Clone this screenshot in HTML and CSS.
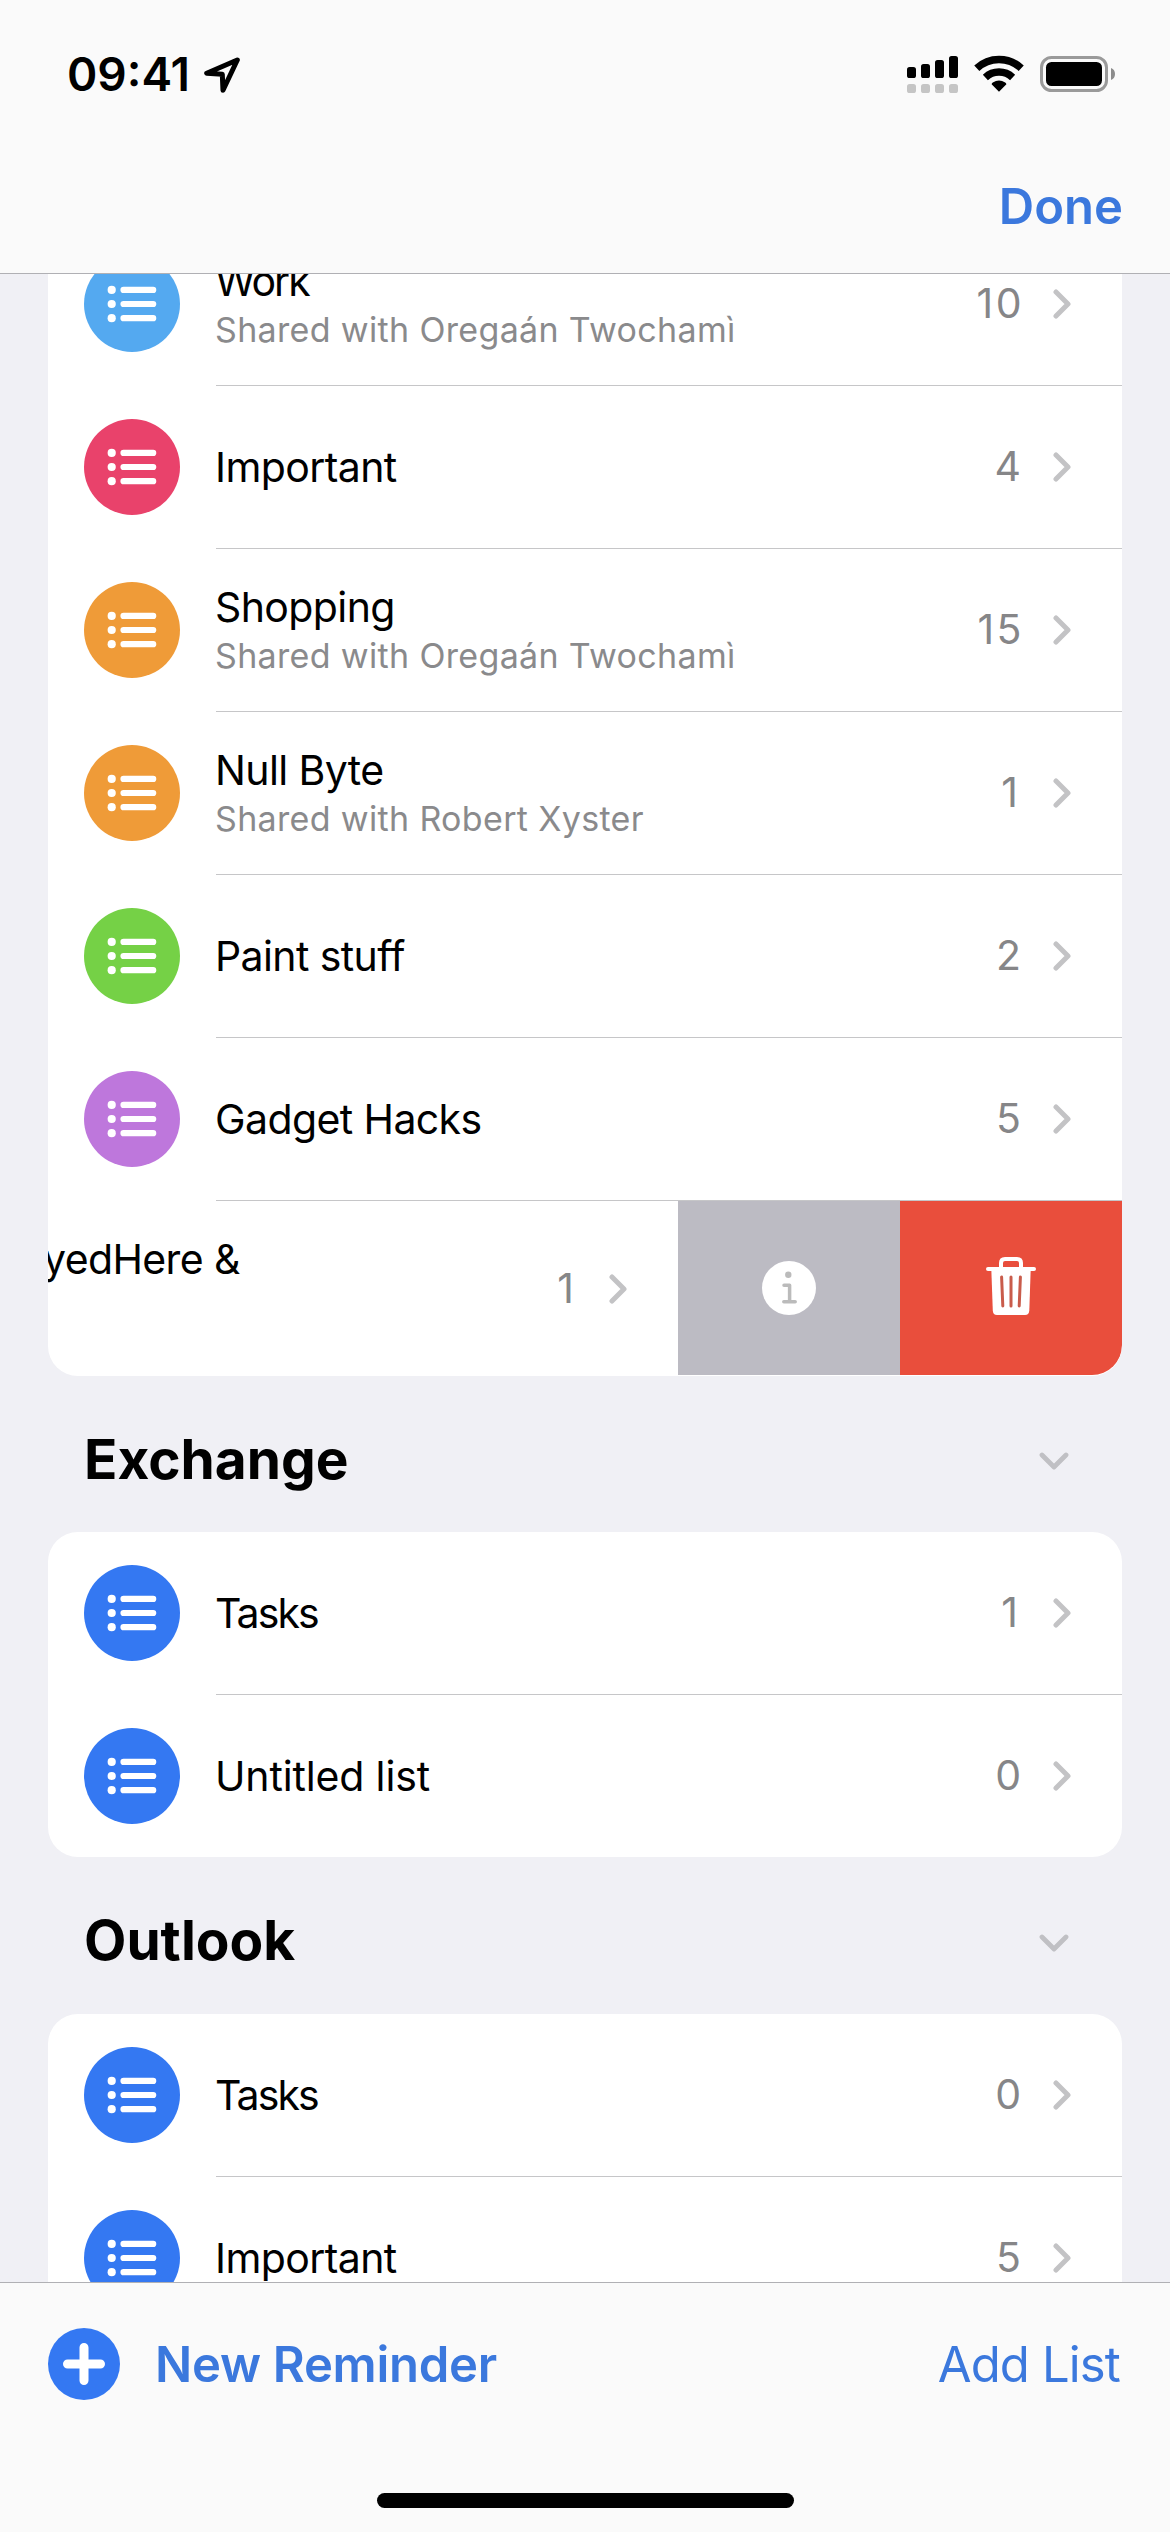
FILE: index.html
```
<!DOCTYPE html>
<html lang="en">
<head>
<meta charset="utf-8">
<title>Reminders</title>
<link rel="stylesheet" href="styles.css">
</head>
<body>
<svg class="sprite" aria-hidden="true">
  <symbol id="list" viewBox="0 0 96 96">
    <g fill="#fff"><circle cx="27.7" cy="33.9" r="4.1"/><circle cx="27.7" cy="48" r="4.1"/><circle cx="27.7" cy="62.2" r="4.1"/></g>
    <path d="M39.5 33.9H69.2M39.5 48H69.2M39.5 62.2H69.2" stroke="#fff" stroke-width="6.2" stroke-linecap="round"/>
  </symbol>
  <symbol id="next" viewBox="0 0 18 30">
    <path d="M3 3L15 15L3 27" fill="none" stroke="#c3c3c5" stroke-width="5" stroke-linecap="round" stroke-linejoin="round"/>
  </symbol>
  <symbol id="down" viewBox="0 0 30 18">
    <path d="M3 3L15 15L27 3" fill="none" stroke="#c0c0c4" stroke-width="4.8" stroke-linecap="round" stroke-linejoin="round"/>
  </symbol>
</svg>
<div class="screen">
  <header class="header">
    <div class="status">
      <div class="status-left">
        <span class="time">09:41</span>
        <svg class="location" width="37" height="37" viewBox="0 0 37 37"><path d="M33.3 3L2.7 16.3L18.3 17.3L19 33.3Z" fill="none" stroke="#000" stroke-width="5" stroke-linejoin="round"/></svg>
      </div>
      <div class="status-right">
        <svg width="51" height="37" viewBox="0 0 51 37">
          <rect x="0" y="11" width="9" height="11" rx="2.6"/><rect x="14" y="8" width="9" height="14" rx="2.6"/><rect x="28" y="4" width="9" height="18" rx="2.6"/><rect x="42" y="0" width="9" height="22" rx="2.6"/>
          <g fill="#c5c5c5"><rect x="0" y="28" width="9" height="9" rx="2.6"/><rect x="14" y="28" width="9" height="9" rx="2.6"/><rect x="28" y="28" width="9" height="9" rx="2.6"/><rect x="42" y="28" width="9" height="9" rx="2.6"/></g>
        </svg>
        <svg class="wifi" width="50" height="37" viewBox="0 0 50 37">
          <path d="M2.8 13.2A32.5 32.5 0 0 1 47.2 13.2M11.4 22.4A20 20 0 0 1 38.6 22.4" fill="none" stroke="#000" stroke-width="7.5"/>
          <path d="M25 36.8L17.6 29.2Q17.8 28.2 18.8 27.6Q25 23.6 31.2 27.6Q32.2 28.2 32.4 29.2Z"/>
        </svg>
        <svg width="75" height="36" viewBox="0 0 75 36">
          <rect x="1.5" y="1.5" width="65" height="33" rx="10" fill="none" stroke="#9a9a9a" stroke-width="3"/>
          <rect x="6" y="6" width="56" height="24" rx="5.5"/>
          <path d="M71 12Q75 13.5 75 18T71 24Z" fill="#8c8c8c"/>
        </svg>
      </div>
    </div>
    <div class="nav"><span class="done">Done</span></div>
  </header>

  <main class="content">
    <section class="card card-first">
      <div class="row">
        <svg class="badge sky"><use href="#list"/></svg>
        <div class="label"><span class="name tight">Work</span><span class="shared">Shared with Oregaán Twochamì</span></div>
        <span class="count two-digit">10</span><svg class="next"><use href="#next"/></svg>
      </div>
      <div class="row">
        <svg class="badge pink"><use href="#list"/></svg>
        <div class="label"><span class="name">Important</span></div>
        <span class="count">4</span><svg class="next"><use href="#next"/></svg>
      </div>
      <div class="row">
        <svg class="badge orange"><use href="#list"/></svg>
        <div class="label"><span class="name">Shopping</span><span class="shared">Shared with Oregaán Twochamì</span></div>
        <span class="count two-digit">15</span><svg class="next"><use href="#next"/></svg>
      </div>
      <div class="row">
        <svg class="badge orange"><use href="#list"/></svg>
        <div class="label"><span class="name">Null Byte</span><span class="shared">Shared with Robert Xyster</span></div>
        <span class="count one">1</span><svg class="next"><use href="#next"/></svg>
      </div>
      <div class="row">
        <svg class="badge green"><use href="#list"/></svg>
        <div class="label"><span class="name">Paint stuff</span></div>
        <span class="count">2</span><svg class="next"><use href="#next"/></svg>
      </div>
      <div class="row">
        <svg class="badge purple"><use href="#list"/></svg>
        <div class="label"><span class="name">Gadget Hacks</span></div>
        <span class="count">5</span><svg class="next"><use href="#next"/></svg>
      </div>
      <div class="swiped">
        <div class="swiped-body">
          <span class="name">yedHere &amp;</span>
          <span class="count one">1</span><svg class="next"><use href="#next"/></svg>
        </div>
        <div class="action info">
          <svg width="54" height="54" viewBox="0 0 54 54">
            <circle cx="27" cy="27" r="27" fill="#fff"/><circle cx="26.3" cy="13.8" r="3.2" fill="#bbb"/>
            <path d="M22 24.3H27.6V40.7M21.8 40.7H33.2" fill="none" stroke="#bbb" stroke-width="3.5" stroke-linecap="round" stroke-linejoin="round"/>
          </svg>
        </div>
        <div class="action trash">
          <svg width="52" height="60" viewBox="0 0 52 60">
            <path d="M16 12V7Q16 3 20 3H32Q36 3 36 7V12" fill="none" stroke="#fff" stroke-width="4"/>
            <path d="M3 13H49" stroke="#fff" stroke-width="4" stroke-linecap="round"/>
            <path d="M6.3 13H45.7L44.3 54.5Q44 59 40 59H12Q8 59 7.8 54.5Z" fill="#fff"/>
            <path d="M16.6 21L17.8 50M26 21V50M35.4 21L34.2 50" stroke="#c95c4b" stroke-width="3" stroke-linecap="round"/>
          </svg>
        </div>
      </div>
    </section>

    <div class="section-head"><h2>Exchange</h2><svg class="down"><use href="#down"/></svg></div>
    <section class="card">
      <div class="row">
        <svg class="badge blue"><use href="#list"/></svg>
        <div class="label"><span class="name tight">Tasks</span></div>
        <span class="count one">1</span><svg class="next"><use href="#next"/></svg>
      </div>
      <div class="row">
        <svg class="badge blue"><use href="#list"/></svg>
        <div class="label"><span class="name loose">Untitled list</span></div>
        <span class="count">0</span><svg class="next"><use href="#next"/></svg>
      </div>
    </section>

    <div class="section-head"><h2>Outlook</h2><svg class="down"><use href="#down"/></svg></div>
    <section class="card">
      <div class="row">
        <svg class="badge blue"><use href="#list"/></svg>
        <div class="label"><span class="name tight">Tasks</span></div>
        <span class="count">0</span><svg class="next"><use href="#next"/></svg>
      </div>
      <div class="row">
        <svg class="badge blue"><use href="#list"/></svg>
        <div class="label"><span class="name">Important</span></div>
        <span class="count">5</span><svg class="next"><use href="#next"/></svg>
      </div>
    </section>
  </main>

  <footer class="footer">
    <div class="toolbar">
      <svg width="72" height="72" viewBox="0 0 72 72"><circle cx="36" cy="36" r="36" fill="#3478f2"/><path d="M19.5 36H52.5M36 19.5V52.5" stroke="#fff" stroke-width="9" stroke-linecap="round"/></svg>
      <span class="new">New Reminder</span>
      <span class="add">Add List</span>
    </div>
    <div class="home"></div>
  </footer>
</div>
</body>
</html>
```
FILE: styles.css
```
* { box-sizing: border-box; }
body { margin: 0; font-family: Inter, "Liberation Sans", sans-serif; color: #000; background: #f0f0f5; }
svg { display: block; flex: none; }
.sprite { position: absolute; width: 0; height: 0; }

.screen { width: 1170px; height: 2532px; display: flex; flex-direction: column; overflow: hidden; }

.header { height: 274px; flex: none; background: #fafafa; border-bottom: 1px solid #b0b0b4; }
.status { height: 148px; padding: 0 55px 0 67px; display: flex; align-items: center; justify-content: space-between; }
.status-left { display: flex; align-items: center; gap: 14px; }
.status-right { display: flex; align-items: center; gap: 16px; }
.time { font-size: 46px; font-weight: 600; line-height: 56px; }
.location { margin-top: 2px; }
.wifi { margin-bottom: 2px; }
.nav { height: 125px; padding: 0 47px 7px 0; display: flex; align-items: center; justify-content: flex-end; }
.done, .new, .add { color: #3b78dd; font-size: 49px; line-height: 60px; }
.done, .new { font-weight: 600; }

.content { flex: 1; min-height: 0; overflow: hidden; padding: 0 48px; }
.card { background: #fff; border-radius: 30px; overflow: hidden; }
.card-first { margin-top: -51px; }

.row { height: 163px; padding: 0 51px 1px 36px; display: flex; align-items: center; position: relative; }
.row:last-child { height: 162px; padding-bottom: 0; }
.row:not(:last-child)::after { content: ""; position: absolute; left: 168px; right: 0; bottom: 0; height: 1px; background: #c6c6c8; }
.badge { width: 96px; height: 96px; border-radius: 50%; margin-right: 35px; }
.sky { background: #54a9f0; }
.pink { background: #e9426b; }
.orange { background: #ef9b38; }
.green { background: #75d146; }
.purple { background: #be77dc; }
.blue { background: #3478f2; }

.label { flex: 1; display: flex; flex-direction: column; }
.label:has(.shared) { padding-top: 3px; }
.name { font-size: 41px; line-height: 48px; letter-spacing: -0.6px; white-space: nowrap; }
.tight { letter-spacing: -1.9px; }
.loose { letter-spacing: -0.15px; }
.shared { font-size: 34px; line-height: 49px; letter-spacing: 0.34px; color: #8a8a8c; white-space: nowrap; }
.count { font-size: 41px; line-height: 48px; color: #868688; margin-right: 32px; padding-bottom: 2px; }
.one { margin-right: 35px; }
.two-digit { letter-spacing: 2.5px; margin-right: 29px; }
.next { width: 18px; height: 30px; }

.swiped { height: 175px; display: flex; }
.swiped-body { width: 630px; padding-right: 51px; display: flex; align-items: center; }
.swiped-body .name { flex: 1; margin-left: -5px; padding-bottom: 59px; }
.action { width: 222px; height: 174px; display: flex; align-items: center; justify-content: center; }
.info { background: #bcbbc3; }
.trash { background: #e94e3c; padding-bottom: 5px; border-bottom-right-radius: 30px; }

.section-head { height: 157px; padding: 9px 53px 0 36px; display: flex; align-items: center; justify-content: space-between; }
.card-first + .section-head { height: 156px; }
.section-head h2 { margin: 0; font-size: 55px; font-weight: 700; line-height: 66px; }
.down { width: 30px; height: 18px; margin-top: 5px; }

.footer { height: 250px; flex: none; background: #fafafa; border-top: 1px solid #b0b0b4; display: flex; flex-direction: column; align-items: center; }
.toolbar { width: 100%; height: 162px; padding: 0 50px 0 48px; display: flex; align-items: center; }
.new { margin-left: 35px; letter-spacing: -0.27px; padding-top: 1px; }
.add { margin-left: auto; letter-spacing: -0.85px; padding-top: 1px; }
.home { width: 417px; height: 15px; margin-top: 48px; border-radius: 8px; background: #000; }
```
